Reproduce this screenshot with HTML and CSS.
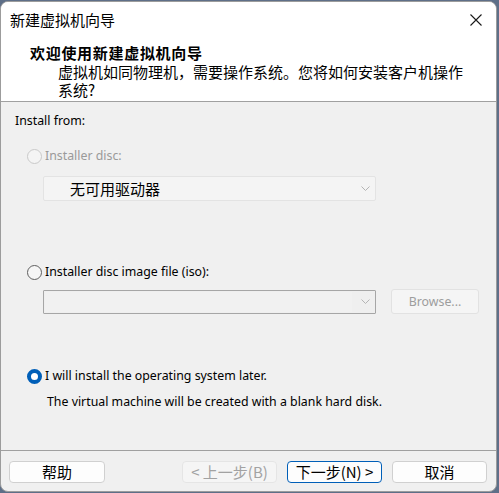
FILE: index.html
```html
<!DOCTYPE html>
<html lang="zh-CN">
<head>
<meta charset="utf-8">
<title>新建虚拟机向导</title>
<link rel="stylesheet" href="styles.css">
</head>
<body>
<div class="window">
  <div class="titlebar">
    <span class="title">新建虚拟机向导</span>
    <svg class="close" width="12" height="12" viewBox="0 0 12 12"><path d="M0.5 0.5 L11.5 11.5 M11.5 0.5 L0.5 11.5" stroke="#1a1a1a" stroke-width="1.1" fill="none"/></svg>
  </div>
  <div class="header">
    <div class="h-title">欢迎使用新建虚拟机向导</div>
    <div class="h-sub">虚拟机如同物理机，需要操作系统。您将如何安装客户机操作系统?</div>
  </div>
  <div class="content">
    <div class="section-label">Install from:</div>
    <div class="option option-first disabled"><span class="radio"></span><span class="opt-label">Installer disc:</span></div>
    <div class="combo combo-disabled">
      <span class="combo-text">无可用驱动器</span>
      <svg class="chev" width="9" height="5" viewBox="0 0 9 5"><path d="M0.5 0.5 L4.5 4.5 L8.5 0.5" stroke="#b4b4b4" stroke-width="1" fill="none"/></svg>
    </div>
    <div class="option option-iso"><span class="radio"></span><span class="opt-label">Installer disc image file (iso):</span></div>
    <div class="file-row">
      <div class="combo combo-file">
        <div class="edit"></div>
        <svg class="chev" width="9" height="5" viewBox="0 0 9 5"><path d="M0.5 0.5 L4.5 4.5 L8.5 0.5" stroke="#b4b4b4" stroke-width="1" fill="none"/></svg>
      </div>
      <div class="browse">Browse...</div>
    </div>
    <div class="option option-later"><span class="radio checked"></span><span class="opt-label">I will install the operating system later.</span></div>
    <div class="desc">The virtual machine will be created with a blank hard disk.</div>
  </div>
  <div class="footer">
    <div class="btn">帮助</div>
    <div class="nav">
      <div class="btn btn-disabled">&lt; 上一步(B)</div>
      <div class="btn btn-default">下一步(N) &gt;</div>
      <div class="btn">取消</div>
    </div>
  </div>
</div>
</body>
</html>
```

FILE: styles.css
```css
html, body {
  margin: 0;
  padding: 0;
}
body {
  background: #5e6f88;
  padding-top: 1px;
  width: 499px;
  height: 492px;
  overflow: hidden;
}
.window {
  box-sizing: border-box;
  width: 497px;
  height: 491px;
  border: 1px solid #9c9c9c;
  border-radius: 8px;
  overflow: hidden;
  background: #f0f0f0;
  display: flex;
  flex-direction: column;
}
.titlebar {
  height: 36px;
  flex: none;
  background: #ffffff;
  display: flex;
  align-items: center;
  justify-content: space-between;
  padding: 0 14px 0 9px;
}
.title {
  font-family: "Noto Sans CJK SC", sans-serif;
  font-size: 15px;
  line-height: 20px;
  color: #000;
}
.close {
  display: block;
  margin-top: -1px;
}
.header {
  flex: none;
  box-sizing: border-box;
  height: 64px;
  background: #ffffff;
  border-bottom: 1px solid #a0a0a0;
  padding: 5px 0 0 29px;
  font-family: "Noto Sans CJK SC", sans-serif;
  font-size: 15px;
  color: #000;
}
.h-title {
  font-weight: 700;
  line-height: 20px;
  letter-spacing: 0.7px;
}
.h-sub {
  margin-left: 28px;
  width: 412px;
  line-height: 18px;
}
.content {
  flex: none;
  height: 348px;
  box-sizing: border-box;
  padding: 10px 0 0 14px;
  font-family: "Noto Sans", sans-serif;
  font-size: 12.35px;
  color: #000;
}
.section-label {
  line-height: 18px;
  height: 18px;
}
.option {
  display: flex;
  align-items: center;
  height: 18px;
  line-height: 18px;
  margin-left: 12px;
}
.option-first { margin-top: 17px; }
.option-iso { margin-top: 62px; }
.option-later { margin-top: 53px; }
.radio {
  box-sizing: border-box;
  width: 15px;
  height: 15px;
  border-radius: 50%;
  border: 1px solid #5f5f5f;
  background: #f6f6f6;
  margin-right: 3px;
  flex: none;
}
.disabled .radio {
  border-color: #c9c9c9;
  background: #f4f4f4;
}
.disabled .opt-label {
  color: #9a9a9a;
}
.radio.checked {
  border: 4.5px solid #005fb8;
  background: #ffffff;
}
.combo {
  box-sizing: border-box;
  width: 333px;
  margin-left: 28px;
  display: flex;
  align-items: center;
  justify-content: space-between;
  padding-right: 5px;
}
.combo-disabled {
  margin-top: 11px;
  height: 25px;
  border: 1px solid #e3e3e3;
  background: #f4f4f4;
  border-radius: 2px;
}
.combo-text {
  padding-left: 26px;
  font-family: "Noto Sans CJK SC", sans-serif;
  font-size: 15px;
  line-height: 20px;
  color: #000;
}
.file-row {
  display: flex;
  align-items: center;
  height: 25px;
  margin-top: 8px;
}
.combo-file {
  height: 24px;
  border: 1px solid #a6a6a6;
  background: #efefef;
  border-radius: 1px;
  padding-left: 1px;
}
.edit {
  width: 307px;
  height: 20px;
  background: #f1f1f1;
}
.browse {
  box-sizing: border-box;
  margin-left: 15px;
  width: 88px;
  height: 25px;
  border: 1px solid #e2e2e2;
  border-radius: 3px;
  background: #f5f5f5;
  color: #9d9d9d;
  text-align: center;
  line-height: 23px;
}
.desc {
  margin-top: 8px;
  margin-left: 32px;
  line-height: 18px;
  height: 18px;
}
.footer {
  flex: 1;
  border-top: 1px solid #a0a0a0;
  display: flex;
  justify-content: space-between;
  align-items: flex-start;
  padding: 10px 9px 0 8px;
}
.nav {
  display: flex;
  gap: 10px;
}
.btn {
  box-sizing: border-box;
  width: 95px;
  height: 22px;
  border: 1px solid #d0d0d0;
  border-radius: 4px;
  background: #fdfdfd;
  font-family: "Noto Sans CJK SC", sans-serif;
  font-size: 15px;
  line-height: 20px;
  text-align: center;
  color: #000;
}
.footer > .btn {
  width: 96px;
}
.btn-disabled {
  background: #f5f5f5;
  border-color: #e5e5e5;
  color: #a2a2a2;
}
.btn-default {
  border-color: #005fb8;
}
```
